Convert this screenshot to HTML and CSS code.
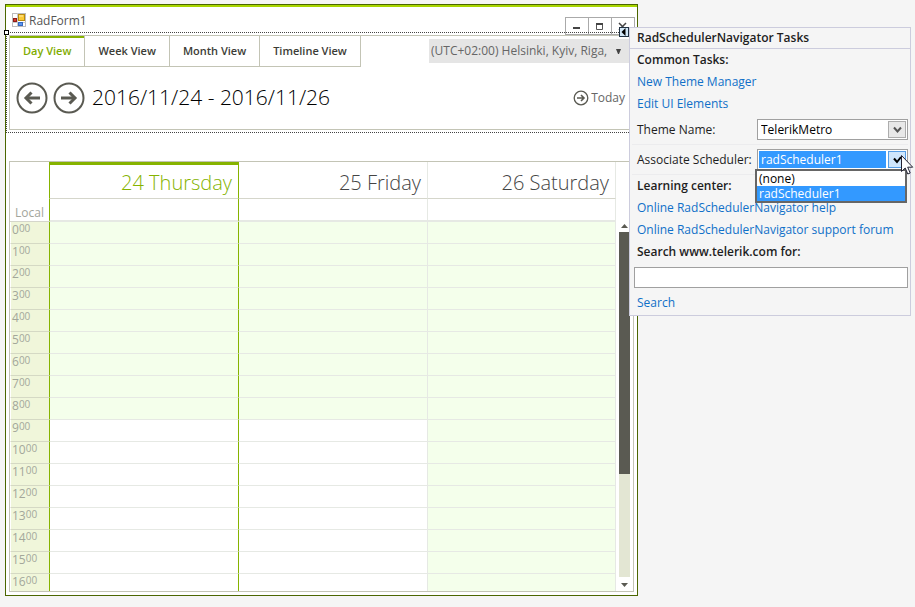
FILE: index.html
```html
<!DOCTYPE html>
<html lang="en">
<head>
<meta charset="utf-8">
<title>RadForm1</title>
<link rel="stylesheet" href="styles.css">
</head>
<body>
<main class="form">
  <header class="titlebar">
    <svg class="app-icon" width="14" height="14" viewBox="0 0 14 14">
      <rect x=".5" y=".5" width="13" height="13" fill="#fff" stroke="#bbb"/>
      <path d="M0 9.500H14M5.500 0V14" stroke="#c8c8c8"/>
      <rect x="6.500" y="1.500" width="6" height="6" fill="#fbc935" stroke="#b98a10"/>
      <path d="M7 3h4" stroke="#ffedaa"/>
      <rect x="1.500" y="5.500" width="3" height="3" fill="#d63a2e" stroke="#8e1b16"/>
      <rect x="6.500" y="9.500" width="4" height="3" fill="#5c95ee" stroke="#3568c0"/>
    </svg>
    <h1 class="form-title">RadForm1</h1>
    <div class="window-buttons">
      <button type="button" aria-label="Minimize"><svg width="22" height="16"><path d="M7 10h7" stroke="#444" stroke-width="2"/></svg></button>
      <button type="button" aria-label="Maximize"><svg width="22" height="16"><path d="M7.500 6v5.500h6V6" fill="none" stroke="#555"/><path d="M7 6h7" stroke="#444" stroke-width="2"/></svg></button>
      <button type="button" aria-label="Close"><svg width="22" height="16"><path d="M7 5l7 7M14 5l-7 7" stroke="#444" stroke-width="1.500"/></svg></button>
    </div>
  </header>

  <section class="selection">
    <span class="handle"></span>
    <div class="navigator">
      <div class="nav-top">
        <div class="tabs">
          <button type="button" class="tab active">Day View</button>
          <button type="button" class="tab">Week View</button>
          <button type="button" class="tab">Month View</button>
          <button type="button" class="tab">Timeline View</button>
        </div>
        <div class="timezone">
          <select aria-label="Time zone"><option>(UTC+02:00) Helsinki, Kyiv, Riga,</option></select>
          <svg class="caret" width="5" height="5"><path d="M0 0h5L3 5H2z" fill="#444"/></svg>
        </div>
      </div>
      <div class="nav-bottom">
        <button type="button" class="round" aria-label="Previous"><svg width="32" height="32" fill="none" stroke="#5a5a52"><circle cx="16" cy="16" r="14.500" stroke-width="2"/><path d="M24 16H10" stroke-width="3"/><path d="M15.500 10.500L10 16l5.500 5.500" stroke-width="3"/></svg></button>
        <button type="button" class="round" aria-label="Next"><svg width="32" height="32" fill="none" stroke="#5a5a52"><circle cx="16" cy="16" r="14.500" stroke-width="2"/><path d="M8 16h14" stroke-width="3"/><path d="M16.500 10.500L22 16l-5.500 5.500" stroke-width="3"/></svg></button>
        <h2 class="range">2016/11/24 - 2016/11/26</h2>
        <button type="button" class="today"><svg width="16" height="16" fill="none" stroke="#5a5a52"><circle cx="8" cy="8" r="6.800" stroke-width="1.300"/><path d="M4 8h7M8 5l3 3-3 3" stroke-width="1.600"/></svg>Today</button>
      </div>
    </div>
    <span class="smart-tag"><svg width="8" height="8"><path d="M5.500 0v8L1.500 4z" fill="#000"/></svg></span>
  </section>

  <section class="scheduler">
    <table class="grid">
      <colgroup><col class="ruler"><col><col><col></colgroup>
      <thead>
        <tr class="days"><th class="local" rowspan="2">Local</th><th class="today-col">24 Thursday</th><th class="after-today">25 Friday</th><th class="last">26 Saturday</th></tr>
        <tr class="allday"><td class="today-col"></td><td class="after-today"></td><td class="last"></td></tr>
      </thead>
      <tbody>
        <tr class="off"><th>0<sup>00</sup></th><td></td><td></td><td></td></tr>
        <tr class="off"><th>1<sup>00</sup></th><td></td><td></td><td></td></tr>
        <tr class="off"><th>2<sup>00</sup></th><td></td><td></td><td></td></tr>
        <tr class="off"><th>3<sup>00</sup></th><td></td><td></td><td></td></tr>
        <tr class="off"><th>4<sup>00</sup></th><td></td><td></td><td></td></tr>
        <tr class="off"><th>5<sup>00</sup></th><td></td><td></td><td></td></tr>
        <tr class="off"><th>6<sup>00</sup></th><td></td><td></td><td></td></tr>
        <tr class="off"><th>7<sup>00</sup></th><td></td><td></td><td></td></tr>
        <tr class="off"><th>8<sup>00</sup></th><td></td><td></td><td></td></tr>
        <tr><th>9<sup>00</sup></th><td></td><td></td><td></td></tr>
        <tr><th>10<sup>00</sup></th><td></td><td></td><td></td></tr>
        <tr><th>11<sup>00</sup></th><td></td><td></td><td></td></tr>
        <tr><th>12<sup>00</sup></th><td></td><td></td><td></td></tr>
        <tr><th>13<sup>00</sup></th><td></td><td></td><td></td></tr>
        <tr><th>14<sup>00</sup></th><td></td><td></td><td></td></tr>
        <tr><th>15<sup>00</sup></th><td></td><td></td><td></td></tr>
        <tr><th>16<sup>00</sup></th><td></td><td></td><td></td></tr>
      </tbody>
    </table>
    <div class="scrollbar">
      <svg width="7" height="4"><path d="M0 4L3.500 0 7 4z" fill="#5a5a52"/></svg>
      <div class="track"><div class="thumb"></div></div>
      <svg width="7" height="4"><path d="M0 0h7L3.500 4z" fill="#5a5a52"/></svg>
    </div>
  </section>
</main>

<aside class="tasks">
  <h2 class="tasks-title">RadSchedulerNavigator Tasks</h2>
  <h3>Common Tasks:</h3>
  <a href="#">New Theme Manager</a>
  <a href="#">Edit UI Elements</a>
  <div class="field">
    <label for="theme">Theme Name:</label>
    <div class="combo">
      <select id="theme"><option>TelerikMetro</option></select>
      <span class="arrow"><svg width="9" height="8"><path d="M1 1.500l3.500 4 3.500-4" fill="none" stroke="#555" stroke-width="2"/></svg></span>
    </div>
  </div>
  <div class="field">
    <label for="sched">Associate Scheduler:</label>
    <div class="combo open">
      <select id="sched"><option>radScheduler1</option></select>
      <span class="arrow"><svg width="9" height="8"><path d="M1 2.500l3 3.500 4-5" fill="none" stroke="#000" stroke-width="2"/></svg></span>
      <ul class="options" role="listbox">
        <li role="option">(none)</li>
        <li role="option" class="picked" aria-selected="true">radScheduler1</li>
      </ul>
      <svg class="cursor" width="13" height="20"><path d="M.5.5v16l3.700-3.500 2.600 6 2.400-1-2.500-5.800h5z" fill="#fff" stroke="#223"/></svg>
    </div>
  </div>
  <h3>Learning center:</h3>
  <a href="#">Online RadSchedulerNavigator help</a>
  <a href="#">Online RadSchedulerNavigator support forum</a>
  <h3><label for="query">Search www.telerik.com for:</label></h3>
  <input id="query" class="query" type="text">
  <a href="#">Search</a>
</aside>
</body>
</html>
```
FILE: styles.css
```css
* { box-sizing: border-box; }

body {
  margin: 0;
  position: relative;
  background: #f5f5f5;
  font-family: "Open Sans", "Noto Sans", sans-serif;
  font-size: 12px;
  line-height: 16px;
  color: #1e1e1e;
}

h1, h2, h3, ul { margin: 0; padding: 0; font-size: 12px; }

button, select, input { font: inherit; color: inherit; }

button { margin: 0; padding: 0; border: 0; background: none; }

select {
  appearance: none;
  border: 0;
  border-radius: 0;
  background: none;
  outline: 0;
}

svg { display: block; flex: none; }

.form {
  display: flex;
  flex-direction: column;
  height: calc(100vh - 15px);
  margin: 4px 277px 0 5px;
  border: 1px solid #4b6600;
  background: #fff;
  color: #555;
}

.titlebar {
  display: flex;
  align-items: center;
  height: 27px;
  padding: 0 2px 0 6px;
  border-top: 2px solid #a9d600;
}

.form-title {
  margin: 2px 0 0 3px;
  font-weight: 400;
}

.window-buttons {
  display: flex;
  align-self: flex-start;
  margin: 10px 0 0 auto;
  border: 1px solid #aaa;
}

.window-buttons button + button { border-left: 1px solid #aaa; }

.selection {
  position: relative;
  padding: 2px;
  border: 1px dotted #444;
}

.handle {
  position: absolute;
  top: -3px;
  left: -3px;
  width: 5px;
  height: 5px;
  border: 1px solid #000;
  background: #fff;
}

.smart-tag {
  position: absolute;
  top: -6px;
  right: 7px;
  width: 10px;
  height: 10px;
  border: 1px solid #234;
  background: #d3e8f8;
}

.navigator {
  height: 95px;
  border: 1px solid #c3c4b5;
}

.nav-top { display: flex; justify-content: space-between; }

.tabs { display: flex; }

.tab {
  height: 31px;
  padding: 0 13px;
  border-right: 1px solid #c3c4b5;
  border-bottom: 1px solid #c3c4b5;
  font-size: 11px;
  font-weight: 600;
  color: #3c3c36;
}

.tab.active {
  box-shadow: inset 0 2px #86b300;
  color: #7fac00;
}

.timezone {
  position: relative;
  display: flex;
  margin-top: 3px;
  width: 204px;
  height: 24px;
  background: #e5e5e5;
  color: #666;
}

.timezone select { width: 100%; padding: 0 2px; }

.caret { position: absolute; top: 10px; right: 12px; }

.nav-bottom {
  display: flex;
  align-items: center;
  height: 62px;
  padding: 0 8px 0 6px;
}

.round + .round { margin-left: 5px; }

.range {
  margin-left: 7px;
  padding-bottom: 2px;
  font-size: 21px;
  line-height: 28px;
  font-weight: 300;
  color: #000;
}

.today {
  display: flex;
  align-items: center;
  gap: 2px;
  margin-left: auto;
  color: #666;
}

.scheduler {
  display: flex;
  flex: 1;
  min-height: 0;
  margin: 28px 3px 3px;
  overflow: hidden;
  border: 1px solid #c3c4b5;
}

.grid {
  flex: 1;
  width: 100%;
  align-self: flex-start;
  table-layout: fixed;
  border-spacing: 0;
}

.grid th, .grid td { padding: 0; }

.ruler { width: 39px; }

.days { height: 37px; }

.days th {
  border-left: 1px solid #e6e9e4;
  border-bottom: 1px solid #d5d6cb;
  font-size: 20px;
  line-height: 28px;
  font-weight: 300;
  text-align: right;
  color: #444;
}

.grid .days th { padding: 5px 6px 0 0; }

.grid .days .local {
  padding-right: 5px;
  border-left: 0;
  font-size: 12px;
  line-height: 16px;
  font-weight: 400;
  vertical-align: bottom;
  color: #a3a59b;
}

.days th.today-col { box-shadow: inset 0 3px #86b300; color: #86b300; }

.allday { height: 23px; }

.allday td {
  border-left: 1px solid #e6e9e4;
  border-bottom: 2px solid #e6e9e4;
}

.grid .today-col, .grid .after-today,
.grid tbody td:nth-child(2), .grid tbody td:nth-child(3) { border-left-color: #86b300; }

.grid .last, .grid tbody td:last-child { border-right: 1px solid #e6e9e4; }

tbody tr { height: 22px; }

tbody th {
  border-bottom: 1px solid #d5d9c4;
  border-left: 1px solid #fff;
  background: #f0f6da;
  font-weight: 400;
  line-height: 16px;
  text-align: left;
  vertical-align: top;
  color: #a3a79a;
}

.grid tbody th { padding-left: 1px; }

tbody sup {
  font-size: 10px;
  line-height: 10px;
  vertical-align: 2px;
}

tbody td {
  border-left: 1px solid #e6e9e4;
  border-bottom: 1px solid #e6e9e4;
}

.off td, tbody td:last-child { background: #f4ffeb; }

.scrollbar {
  display: flex;
  flex: none;
  flex-direction: column;
  align-items: center;
  gap: 4px;
  margin-left: 3px;
  width: 14px;
  padding: 62px 3px 4px 0;
}

.track {
  flex: 1;
  width: 11px;
  background: #e3e6d3;
}

.thumb { height: 70%; background: #5a5a52; }

.scrollbar svg:last-child { margin-top: 2px; }

.tasks {
  position: absolute;
  top: 27px;
  right: 4px;
  width: 282px;
  padding-bottom: 1px;
  border: 1px solid #ccccdd;
  background: #f5f5f5;
}

.tasks h2, .tasks h3, .tasks a {
  display: block;
  padding-left: 7px;
  line-height: 22px;
  font-weight: 600;
}

.tasks .tasks-title {
  border-bottom: 1px solid #ccccdd;
  line-height: 20px;
}

.tasks a {
  font-weight: 400;
  color: #1070c8;
  text-decoration: none;
}

.field {
  display: flex;
  align-items: center;
  justify-content: space-between;
  height: 30px;
  margin: 0 2px;
  padding-left: 5px;
  border-bottom: 1px solid #ececee;
}

.combo {
  position: relative;
  display: flex;
  width: 151px;
  height: 21px;
  padding: 1px;
  border: 1px solid #a0a0a0;
  background: #fff;
  color: #000;
}

.combo select { flex: 1; padding: 0 2px; }

.arrow {
  display: flex;
  align-items: center;
  justify-content: center;
  width: 18px;
  border: 1px solid #adadad;
  background: #e8e8e8;
}

.open select { margin: 0 2px 0 0; background: #3399ff; color: #fff; }

.open .arrow { border-color: #569de5; background: #cfe6fc; }

.options {
  position: absolute;
  top: 19px;
  left: -3px;
  z-index: 1;
  width: 152px;
  border: 2px solid #666;
  background: #fff;
  list-style: none;
  line-height: 15px;
}

.options li { padding: 0 2px; }

.options .picked { background: #3399ff; color: #fff; }

.cursor { position: absolute; top: 5px; right: -7px; z-index: 2; }

.query {
  display: block;
  width: calc(100% - 6px);
  height: 21px;
  margin: 4px 2px 4px 4px;
  border: 1px solid #a0a0a0;
  background: #fff;
}
```
